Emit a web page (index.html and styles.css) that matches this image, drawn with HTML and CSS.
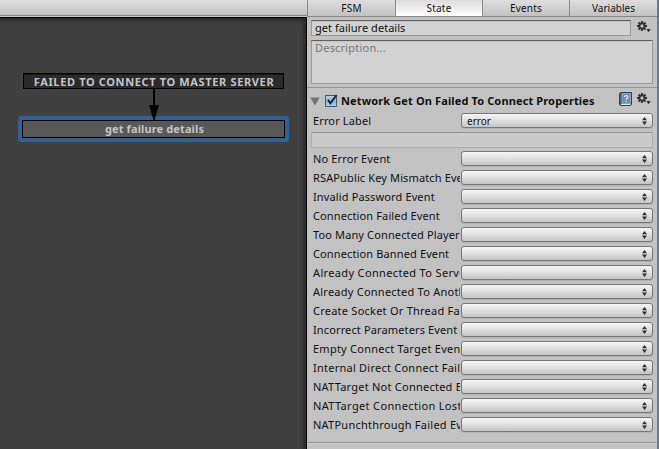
FILE: index.html
```
<!DOCTYPE html>
<html lang="en">
<head>
<meta charset="utf-8">
<title>State editor</title>
<link rel="stylesheet" href="styles.css">
</head>
<body>
<svg class="defs" width="0" height="0" aria-hidden="true">
  <symbol id="gear" viewBox="0 0 14 12">
    <g stroke="#303030" stroke-width="1.9">
      <path d="M5 0V10M0 5H10M1.5 1.5L8.5 8.5M8.5 1.5L1.5 8.5"/>
    </g>
    <circle cx="5" cy="5" r="2.6" fill="#c2c2c2" stroke="#303030" stroke-width="1.9"/>
    <path d="M9.4 8H13.6L11.5 11.6Z" fill="#303030"/>
  </symbol>
</svg>
<div class="window">
  <section class="graph">
    <div class="toolbar"></div>
    <div class="canvas">
      <div class="node event">FAILED TO CONNECT TO MASTER SERVER</div>
      <svg class="arrow" width="12" height="31" viewBox="0 0 12 31"><path d="M5 0H7V16H11L6.5 31H5.5L1 16H5Z"/></svg>
      <div class="node state"><span>get failure details</span></div>
    </div>
  </section>
  <section class="inspector">
    <nav class="tabs"><span>FSM</span><span class="active">State</span><span>Events</span><span>Variables</span></nav>
    <div class="name-row"><div class="field name">get failure details</div><svg class="gear" width="14" height="12"><use href="#gear"/></svg></div>
    <div class="field description">Description...</div>
    <div class="action">
      <header>
        <svg class="fold" width="10" height="9" viewBox="0 0 10 9"><path d="M0.3 0.5H9.7L5 8.6Z"/></svg>
        <svg class="check" width="14" height="13" viewBox="0 0 14 13">
          <defs><linearGradient id="cb" x2="0" y2="1"><stop stop-color="#c0d5e5"/><stop offset=".5" stop-color="#83b4d9"/><stop offset="1" stop-color="#a4d4ef"/></linearGradient></defs>
          <rect x=".5" y="1.5" width="11" height="11" fill="url(#cb)" stroke="#485c6c"/>
          <path d="M3 5.8L5.4 9.4L11.6 1" fill="none" stroke="#17222b" stroke-width="1.8"/>
        </svg>
        <h1>Network Get On Failed To Connect Properties</h1>
        <svg class="book" width="13" height="14" viewBox="0 0 13 14">
          <path d="M.5 1.5L2 .5H12.5V12.5L11.5 13.5H1.5L.5 12.5Z" fill="#3b5f7c" stroke="#29435a"/>
          <path d="M3 1.5H11.5V11.5H3Z" fill="#6791b0" stroke="#a8bdcb" stroke-width=".7"/>
          <path d="M2 12.5H11.5" stroke="#e2e7ea"/>
          <path d="M5.4 5C5.4 3.1 9 3.1 9 5C9 6.3 7.2 6.2 7.2 7.8M7.2 8.8V10" fill="none" stroke="#e9f2f8" stroke-width="1.1"/>
        </svg>
        <svg class="gear" width="14" height="12"><use href="#gear"/></svg>
      </header>
      <div class="rows" id="rows"></div>
    </div>
  </section>
</div>
<script src="script.js"></script>
</body>
</html>
```
FILE: styles.css
```
* { box-sizing: border-box; }
body { margin: 0; font: 11px/15px "Noto Sans", sans-serif; color: #111; overflow: hidden; }
svg { display: block; flex: none; }
.defs { position: absolute; }
.window { display: flex; width: 659px; height: 449px; background: #c2c2c2; }
.graph { width: 307px; display: flex; flex-direction: column; }
.toolbar { height: 17px; background: linear-gradient(#dedede, #c4c4c4 14px, #b5b5b5 15px, #858585 15px, #858585 16px, #c9c9c9 16px); }
.canvas { flex: 1; padding: 55px 17px 0 18px; background: #404040; border-top: 1px solid #000; border-right: 1px solid #000; box-shadow: inset -3px 3px 4px -1px #252525; display: flex; flex-direction: column; align-items: center; }
.node { font-weight: bold; text-align: center; white-space: nowrap; color: #c4c4c4; }
.event { width: 261px; height: 16px; margin-right: 1px; padding-left: 2px; border: 1px solid #000; background: #2b2b2b; line-height: 16px; box-shadow: inset 0 1px #161616; letter-spacing: .64px; }
.arrow { margin-bottom: -4px; position: relative; z-index: 1; }
.state { width: 271px; height: 26px; padding: 4px; border-radius: 3px; background: #306394; }
.state span { display: block; height: 18px; padding-left: 2px; border: 1px solid #000; background: #585858; line-height: 15px; letter-spacing: .12px; }
.inspector { width: 352px; border-right: 2px solid #627da0; }
.tabs { display: flex; height: 17px; border-bottom: 1px solid #858585; border-left: 1px solid #8a8a8a; }
.tabs span { width: 87px; font-size: 10px; line-height: 17px; text-align: center; background: linear-gradient(#dedede, #c2c2c2); letter-spacing: .2px; }
.tabs span:last-child { flex: 1; letter-spacing: 0; }
.tabs span + span { border-left: 1px solid #8a8a8a; }
.tabs .active { background: linear-gradient(#dcdcdc, #fff); }
.name-row { display: flex; margin-top: 3px; }
.field { margin-left: 4px; border: 1px solid #999; border-top-color: #606060; background: #d2d2d2; padding-left: 3px; box-shadow: inset 0 1px #c4c4c4; white-space: nowrap; }
.name { width: 320px; height: 16px; line-height: 13px; letter-spacing: .04px; }
.name-row .gear { margin: 1px 0 0 6px; }
.description { width: 342px; height: 44px; margin-top: 4px; line-height: 14px; color: #777; letter-spacing: .2px; }
.action { height: 356px; margin-top: 3px; border: solid #949494; border-width: 1px 0; box-shadow: 0 1px #cfcfcf; }
.action header { display: flex; height: 25px; padding-left: 3px; }
.fold { margin-top: 9px; fill: #747474; }
.check { margin: 6px 0 0 5px; }
h1 { width: 278px; margin: 5px 0 0 2px; font: bold 11px/15px "Noto Sans", sans-serif; letter-spacing: .13px; white-space: nowrap; }
.book { margin-top: 4px; }
.action .gear { margin: 5px 0 0 5px; }
.rows { display: flex; flex-direction: column; gap: 3px; }
.row { display: flex; height: 16px; }
.label { width: 147px; margin-left: 6px; overflow: hidden; white-space: nowrap; line-height: 15px; letter-spacing: .13px; }
.label.loose { letter-spacing: .24px; }
.label.looser { letter-spacing: .35px; }
.popup { display: flex; align-items: center; justify-content: space-between; width: 192px; height: 15px; margin-left: 1px; padding: 1px 5px 0; border: 1px solid #777; border-radius: 3px; background: linear-gradient(#f5f5f5, #e2e2e2 45%, #c4c4c4); box-shadow: 0 1px #b1b1b1; font-size: 10px; line-height: 14px; letter-spacing: 0; }
.popup svg { margin: -1px 0 0 auto; fill: #303030; }
.blank { width: 342px; height: 16px; margin-left: 4px; border: 1px solid #acacac; border-top-color: #929292; background: #cacaca; }
```
FILE: script.js
```
const rows = [["Error Label"], null, ["No Error Event"], ["RSAPublic Key Mismatch Event"],
  ["Invalid Password Event"], ["Connection Failed Event"], ["Too Many Connected Players Event"],
  ["Connection Banned Event"], ["Already Connected To Server Event", "looser"],
  ["Already Connected To Another Server Event", "loose"],
  ["Create Socket Or Thread Failure Event", "loose"], ["Incorrect Parameters Event"],
  ["Empty Connect Target Event", "loose"], ["Internal Direct Connect Failed Event", "loose"],
  ["NATTarget Not Connected Event", "loose"], ["NATTarget Connection Lost Event", "looser"],
  ["NATPunchthrough Failed Event", "loose"]];
document.getElementById("rows").innerHTML = rows.map((row, i) => row === null
  ? '<div class="blank"></div>'
  : `<div class="row"><div class="label ${row[1] || ""}">${row[0]}</div><div class="popup">${i ? "" : "error"}<svg width="5" height="8" viewBox="0 0 5 8"><path d="M0 3.2L2.5 0L5 3.2ZM0 4.6L2.5 8L5 4.6Z"/></svg></div></div>`
).join("");
```
